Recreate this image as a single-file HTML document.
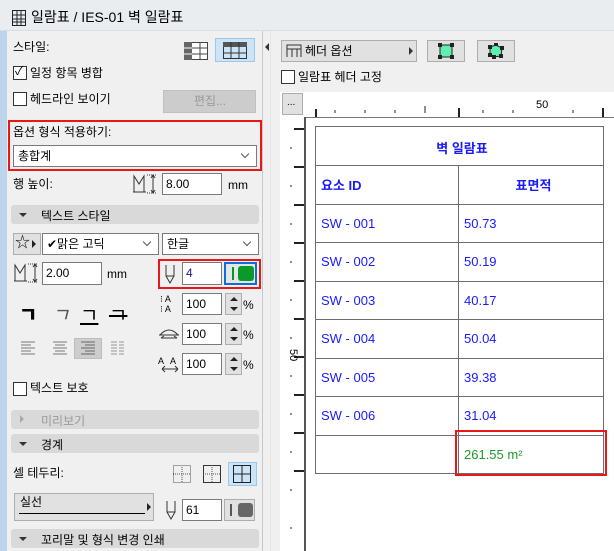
<!DOCTYPE html>
<html><head><meta charset="utf-8"><style>
*{box-sizing:border-box;margin:0;padding:0}
body{width:614px;height:551px;overflow:hidden;background:#f0f0f0;font-family:"Liberation Sans","Noto Sans CJK KR",sans-serif;font-size:12px;color:#000;position:relative}
.a{position:absolute}
.t{position:absolute;white-space:nowrap;line-height:14px}
.cb{position:absolute;width:14px;height:14px;border:1px solid #333;background:#fff}
.inp{position:absolute;background:#fff;border:1px solid #7a7a7a;padding-left:3px;line-height:20px;font-size:12px}
.bar{position:absolute;left:11px;width:248px;height:19px;background:#d9d9d9;border-radius:3px}
.bar .tri{position:absolute;left:8px;top:8px;width:0;height:0;border-left:4px solid transparent;border-right:4px solid transparent;border-top:4px solid #333}
.bar span{position:absolute;left:30px;top:2px}
.dd{position:absolute;background:#fff;border:1px solid #7a7a7a}
.chev{position:absolute;right:8px;top:5px;width:6px;height:6px;border-right:1px solid #555;border-bottom:1px solid #555;transform:rotate(45deg)}
.spin{position:absolute;width:17px;height:22px;background:#e1e1e1;border:1px solid #adadad}
.spin:before{content:"";position:absolute;left:4px;top:3px;border-left:4px solid transparent;border-right:4px solid transparent;border-bottom:4px solid #222}
.spin:after{content:"";position:absolute;left:4px;top:13px;border-left:4px solid transparent;border-right:4px solid transparent;border-top:4px solid #222}
.tb td{border:1px solid #6d6d6d;color:#1a1aff;font-size:13px;padding-left:5px;height:38.5px}
.g{position:absolute;white-space:nowrap;font-size:20px;line-height:22px;top:305px}
</style></head><body>
<div class="a" style="left:0;top:0;width:614px;height:31px;background:#eaedf0;border-bottom:1px solid #d8dde2"></div>
<svg class="a" style="left:12px;top:10px" width="14" height="16"><rect x="0.5" y="0.5" width="13" height="15" fill="none" stroke="#222"/><path d="M5 1V15M9 1V15M1 5H13M1 9H13M1 12H13" stroke="#222"/></svg>
<div class="t" style="left:31px;top:10px;font-size:14px">일람표 / IES-01 벽 일람표</div>
<div class="a" style="left:0;top:31px;width:7px;height:520px;background:#bcd5ec"></div>
<div class="a" style="left:262px;top:31px;width:1px;height:520px;background:#c8c8c8"></div>

<div class="t" style="left:13px;top:40px">스타일:</div>
<svg class="a" style="left:184px;top:42px" width="24" height="18"><rect x="0.5" y="0.5" width="23" height="17" fill="#fff" stroke="#444"/><rect x="0" y="0" width="8" height="18" fill="#666"/><path d="M8 6H24M8 12H24M16 0V18" stroke="#444"/><path d="M0 6H8M0 12H8" stroke="#fff"/></svg>
<div class="a" style="left:215px;top:38px;width:40px;height:24px;background:#cce4f7;border:1px solid #99c9ef"></div>
<svg class="a" style="left:223px;top:42px" width="24" height="17"><rect x="0.5" y="0.5" width="23" height="16" fill="none" stroke="#333"/><rect x="0" y="0" width="24" height="5" fill="#555"/><path d="M8 0V17M16 0V17M0 11H24" stroke="#333"/></svg>
<div class="cb" style="left:13px;top:66px"></div><div class="t" style="left:15px;top:64px;font-size:12px">✓</div>
<div class="t" style="left:30px;top:66px">일정 항목 병합</div>
<div class="cb" style="left:13px;top:92px"></div>
<div class="t" style="left:30px;top:92px">헤드라인 보이기</div>
<div class="a" style="left:163px;top:90px;width:93px;height:23px;background:#ccc;border:1px solid #c0c0c0"></div>
<div class="t" style="left:194px;top:94px;color:#999">편집...</div>
<div class="a" style="left:8px;top:120px;width:254px;height:51px;border:2px solid #e81818"></div>
<div class="t" style="left:13px;top:125px">옵션 형식 적용하기:</div>
<div class="dd" style="left:13px;top:145px;width:244px;height:22px"><div class="chev"></div></div>
<div class="t" style="left:18px;top:149px">총합계</div>
<div class="t" style="left:13px;top:177px">행 높이:</div>
<svg class="a" style="left:132px;top:174px" width="26" height="20"><path d="M2 18V2L7 10L12 2V18M1 18H14" fill="none" stroke="#333"/><path d="M15 1H24M15 19H24" stroke="#333" stroke-dasharray="1 1"/><path d="M21 2V18M19 4L21 1L23 4M19 16L21 19L23 16" fill="none" stroke="#333"/></svg>
<div class="inp" style="left:162px;top:173px;width:60px;height:22px">8.00</div>
<div class="t" style="left:228px;top:178px">mm</div>
<div class="bar" style="top:205px"><div class="tri"></div><span>텍스트 스타일</span></div>
<div class="a" style="left:13px;top:233px;width:28px;height:22px;background:#e1e1e1;border:1px solid #adadad"></div>
<div class="t" style="left:15px;top:236px;font-size:15px">☆</div><div class="a" style="left:32px;top:240px;border-top:4px solid transparent;border-bottom:4px solid transparent;border-left:4px solid #222"></div>
<div class="dd" style="left:42px;top:233px;width:117px;height:22px"><div class="chev"></div></div>
<div class="t" style="left:47px;top:237px">✔맑은 고딕</div>
<div class="dd" style="left:162px;top:233px;width:97px;height:22px"><div class="chev"></div></div>
<div class="t" style="left:167px;top:237px">한글</div>
<svg class="a" style="left:13px;top:263px" width="28" height="20"><path d="M2 18V2L7 10L12 2V18M1 18H14" fill="none" stroke="#333"/><path d="M15 1H25M15 19H25" stroke="#333" stroke-dasharray="1 1"/><path d="M22 2V18M20 4L22 1L24 4M20 16L22 19L24 16" fill="none" stroke="#333"/></svg>
<div class="inp" style="left:42px;top:262px;width:60px;height:23px">2.00</div>
<div class="t" style="left:107px;top:267px">mm</div>
<div class="a" style="left:158px;top:259px;width:103px;height:30px;border:2px solid #e81818"></div>
<svg class="a" style="left:164px;top:264px" width="12" height="20"><path d="M2 1V12L6 19L10 12V1M2 12H10" fill="none" stroke="#333"/></svg>
<div class="inp" style="left:182px;top:262px;width:40px;height:23px;color:#1a1a80">4</div>
<div class="a" style="left:224px;top:262px;width:33px;height:23px;border:2px solid #0a6fd6;background:#e5e5e5"></div>
<div class="a" style="left:232px;top:267px;width:2px;height:13px;background:#009a2a"></div>
<div class="a" style="left:238px;top:266px;width:16px;height:15px;background:#0a9a2a;border-radius:3px"></div>
<div class="g" style="left:19px;font-weight:900">ㄱ</div>
<div class="g" style="left:51px;font-style:italic;color:#555">ㄱ</div>
<div class="g" style="left:80px;text-decoration:underline">ㄱ</div>
<div class="g" style="left:109px;text-decoration:line-through">ㄱ</div>
<svg class="a" style="left:20px;top:341px" width="110" height="14"><g stroke="#777"><path d="M1 1H15M1 4H11M1 7H15M1 10H11M1 13H15"/><path d="M33 1H47M35 4H45M33 7H47M35 10H45M33 13H47"/></g></svg>
<div class="a" style="left:74px;top:338px;width:28px;height:21px;background:#cdcdcd;border:1px solid #bdbdbd"></div>
<svg class="a" style="left:80px;top:341px" width="50" height="14"><g stroke="#666"><path d="M1 1H15M5 4H15M1 7H15M5 10H15M1 13H15"/><path d="M31 1H37M39 1H44M31 4H37M39 4H44M31 7H37M39 7H44M31 10H37M39 10H44M31 13H37M39 13H44" stroke="#999"/></g></svg>
<div class="t" style="left:160px;top:294px;font-size:9px;line-height:10px">⁝ A<br>⁝ A</div>
<div class="inp" style="left:182px;top:293px;width:40px;height:22px">100</div><div class="spin" style="left:225px;top:293px"></div><div class="t" style="left:243px;top:298px">%</div>
<svg class="a" style="left:158px;top:325px" width="22" height="16"><path d="M2 10Q11 0 20 10M1 10H21M3 13H19M3 13L6 11M19 13L16 11" fill="none" stroke="#333"/></svg>
<div class="inp" style="left:182px;top:323px;width:40px;height:22px">100</div><div class="spin" style="left:225px;top:323px"></div><div class="t" style="left:243px;top:328px">%</div>
<div class="t" style="left:158px;top:354px;font-size:9px;letter-spacing:6px">AA</div>
<svg class="a" style="left:160px;top:364px" width="20" height="10"><path d="M2 5H18M2 5L5 2M2 5L5 8M18 5L15 2M18 5L15 8" fill="none" stroke="#333"/></svg>
<div class="inp" style="left:182px;top:353px;width:40px;height:22px">100</div><div class="spin" style="left:225px;top:353px"></div><div class="t" style="left:243px;top:358px">%</div>
<div class="cb" style="left:13px;top:382px"></div>
<div class="t" style="left:30px;top:381px">텍스트 보호</div>
<div class="bar" style="top:410px"><div class="tri" style="left:9px;top:5px;border-top:4px solid transparent;border-bottom:4px solid transparent;border-left:4px solid #aaa;border-right:0"></div><span style="color:#999">미리보기</span></div>
<div class="bar" style="top:434px"><div class="tri"></div><span>경계</span></div>
<div class="t" style="left:13px;top:466px">셀 테두리:</div>
<svg class="a" style="left:172px;top:464px" width="20" height="20"><g fill="none" stroke="#555" stroke-dasharray="1 1"><rect x="1.5" y="1.5" width="17" height="17"/><path d="M10 1V19M1 10H19"/></g></svg>
<svg class="a" style="left:202px;top:464px" width="20" height="20"><rect x="1.5" y="1.5" width="17" height="17" fill="none" stroke="#333"/><path d="M10 1V19M1 10H19" stroke="#555" stroke-dasharray="1 1"/></svg>
<div class="a" style="left:228px;top:462px;width:29px;height:24px;background:#cce4f7;border:1px solid #99c9ef"></div>
<svg class="a" style="left:232px;top:464px" width="20" height="20"><rect x="1.5" y="1.5" width="17" height="17" fill="none" stroke="#222"/><path d="M10 1V19M1 10H19" stroke="#222"/></svg>
<div class="a" style="left:14px;top:493px;width:140px;height:28px;background:#e1e1e1;border:1px solid #adadad"></div>
<div class="t" style="left:20px;top:495px">실선</div>
<div class="a" style="left:19px;top:513px;width:126px;height:1px;background:#000"></div>
<div class="a" style="left:147px;top:503px;border-top:4px solid transparent;border-bottom:4px solid transparent;border-left:4px solid #222"></div>
<svg class="a" style="left:165px;top:500px" width="12" height="20"><path d="M2 1V12L6 19L10 12V1M2 12H10" fill="none" stroke="#333"/></svg>
<div class="inp" style="left:182px;top:499px;width:40px;height:22px">61</div>
<div class="a" style="left:224px;top:499px;width:31px;height:22px;background:#e1e1e1;border:1px solid #adadad"></div>
<div class="a" style="left:230px;top:504px;width:2px;height:12px;background:#555"></div>
<div class="a" style="left:238px;top:503px;width:15px;height:14px;background:#666;border-radius:3px"></div>
<div class="bar" style="top:529px"><div class="tri"></div><span>꼬리말 및 형식 변경 인쇄</span></div>

<div class="a" style="left:265px;top:43px;border-top:4px solid transparent;border-bottom:4px solid transparent;border-right:4px solid #333"></div>
<div class="a" style="left:270px;top:31px;width:1px;height:520px;background:#e6e6e6"></div>

<div class="a" style="left:281px;top:40px;width:136px;height:22px;background:#e1e1e1;border:1px solid #adadad"></div>
<svg class="a" style="left:286px;top:44px" width="16" height="14"><path d="M1 13V1H15V13M1 5H15M6 5V13M11 5V13" fill="none" stroke="#333"/></svg>
<div class="t" style="left:305px;top:44px">헤더 옵션</div>
<div class="a" style="left:409px;top:47px;border-top:4px solid transparent;border-bottom:4px solid transparent;border-left:4px solid #333"></div>
<div class="a" style="left:427px;top:40px;width:38px;height:22px;background:#e1e1e1;border:1px solid #adadad"></div>
<svg class="a" style="left:438px;top:43px" width="16" height="16"><rect x="2" y="2" width="12" height="12" fill="#5ff0b0" stroke="#222"/><g fill="#222"><rect x="0" y="0" width="4" height="4"/><rect x="12" y="0" width="4" height="4"/><rect x="0" y="12" width="4" height="4"/><rect x="12" y="12" width="4" height="4"/></g></svg>
<div class="a" style="left:477px;top:40px;width:38px;height:22px;background:#e1e1e1;border:1px solid #adadad"></div>
<svg class="a" style="left:488px;top:43px" width="16" height="16"><path d="M2 4L8 2L14 5L13 13L5 14L2 11Z" fill="#5ff0b0" stroke="#222"/><g fill="#222"><rect x="0" y="2" width="4" height="4"/><rect x="6" y="0" width="4" height="3"/><rect x="12" y="3" width="4" height="4"/><rect x="0" y="10" width="4" height="4"/><rect x="4" y="12" width="4" height="4"/><rect x="11" y="11" width="4" height="4"/></g></svg>
<div class="cb" style="left:281px;top:70px"></div>
<div class="t" style="left:298px;top:70px">일람표 헤더 고정</div>

<div class="a" style="left:280px;top:92px;width:334px;height:459px;background:#fff"></div>
<div class="a" style="left:282px;top:93px;width:21px;height:22px;background:#e1e1e1;border:1px solid #adadad"></div>
<div class="t" style="left:287px;top:96px;font-size:10px">...</div>
<svg class="a" style="left:303px;top:92px" width="311" height="26"><g stroke="#222">
<path d="M13 17V25M156 16V25M300 16V25" stroke-width="2"/>
<path d="M32 18V21M62 18V21M92 18V21M180 18V21M210 18V21M270 18V21M122 14V21"/></g>
<text x="233" y="16" font-size="11" font-family="Liberation Sans">50</text></svg>
<div class="a" style="left:305px;top:117px;width:309px;height:1px;background:#777"></div>
<div class="a" style="left:304px;top:117px;width:2px;height:434px;background:#555"></div>
<svg class="a" style="left:282px;top:117px" width="22" height="434"><g stroke="#222">
<path d="M12 12H22M12 50H22M12 88H22M12 126H22M12 164H22M12 202H22M12 240H22M12 278H22M12 316H22M12 354H22" stroke-width="2"/>
<path d="M8 31H10M8 69H10M8 107H10M8 145H10M8 183H10M8 221H10M8 259H10M8 297H10M8 335H10M8 373H10M8 411H10"/></g>
<text x="0" y="0" font-size="11" transform="translate(8,232) rotate(90)" font-family="Liberation Sans">50</text></svg>

<table class="tb a" style="left:315px;top:126px;width:289px;border-collapse:collapse">
<tr><td colspan="2" style="text-align:center;font-weight:bold;height:39px;padding-top:2px">벽 일람표</td></tr>
<tr><td style="width:143px;font-weight:bold">요소 ID</td><td style="text-align:center;font-weight:bold">표면적</td></tr>
<tr><td>SW - 001</td><td>50.73</td></tr>
<tr><td>SW - 002</td><td>50.19</td></tr>
<tr><td>SW - 003</td><td>40.17</td></tr>
<tr><td>SW - 004</td><td>50.04</td></tr>
<tr><td>SW - 005</td><td>39.38</td></tr>
<tr><td>SW - 006</td><td>31.04</td></tr>
<tr><td></td><td style="color:#1a9a2a">261.55 m²</td></tr>
</table>
<div class="a" style="left:455px;top:430px;width:152px;height:46px;border:2px solid #e81818"></div>
</body></html>
